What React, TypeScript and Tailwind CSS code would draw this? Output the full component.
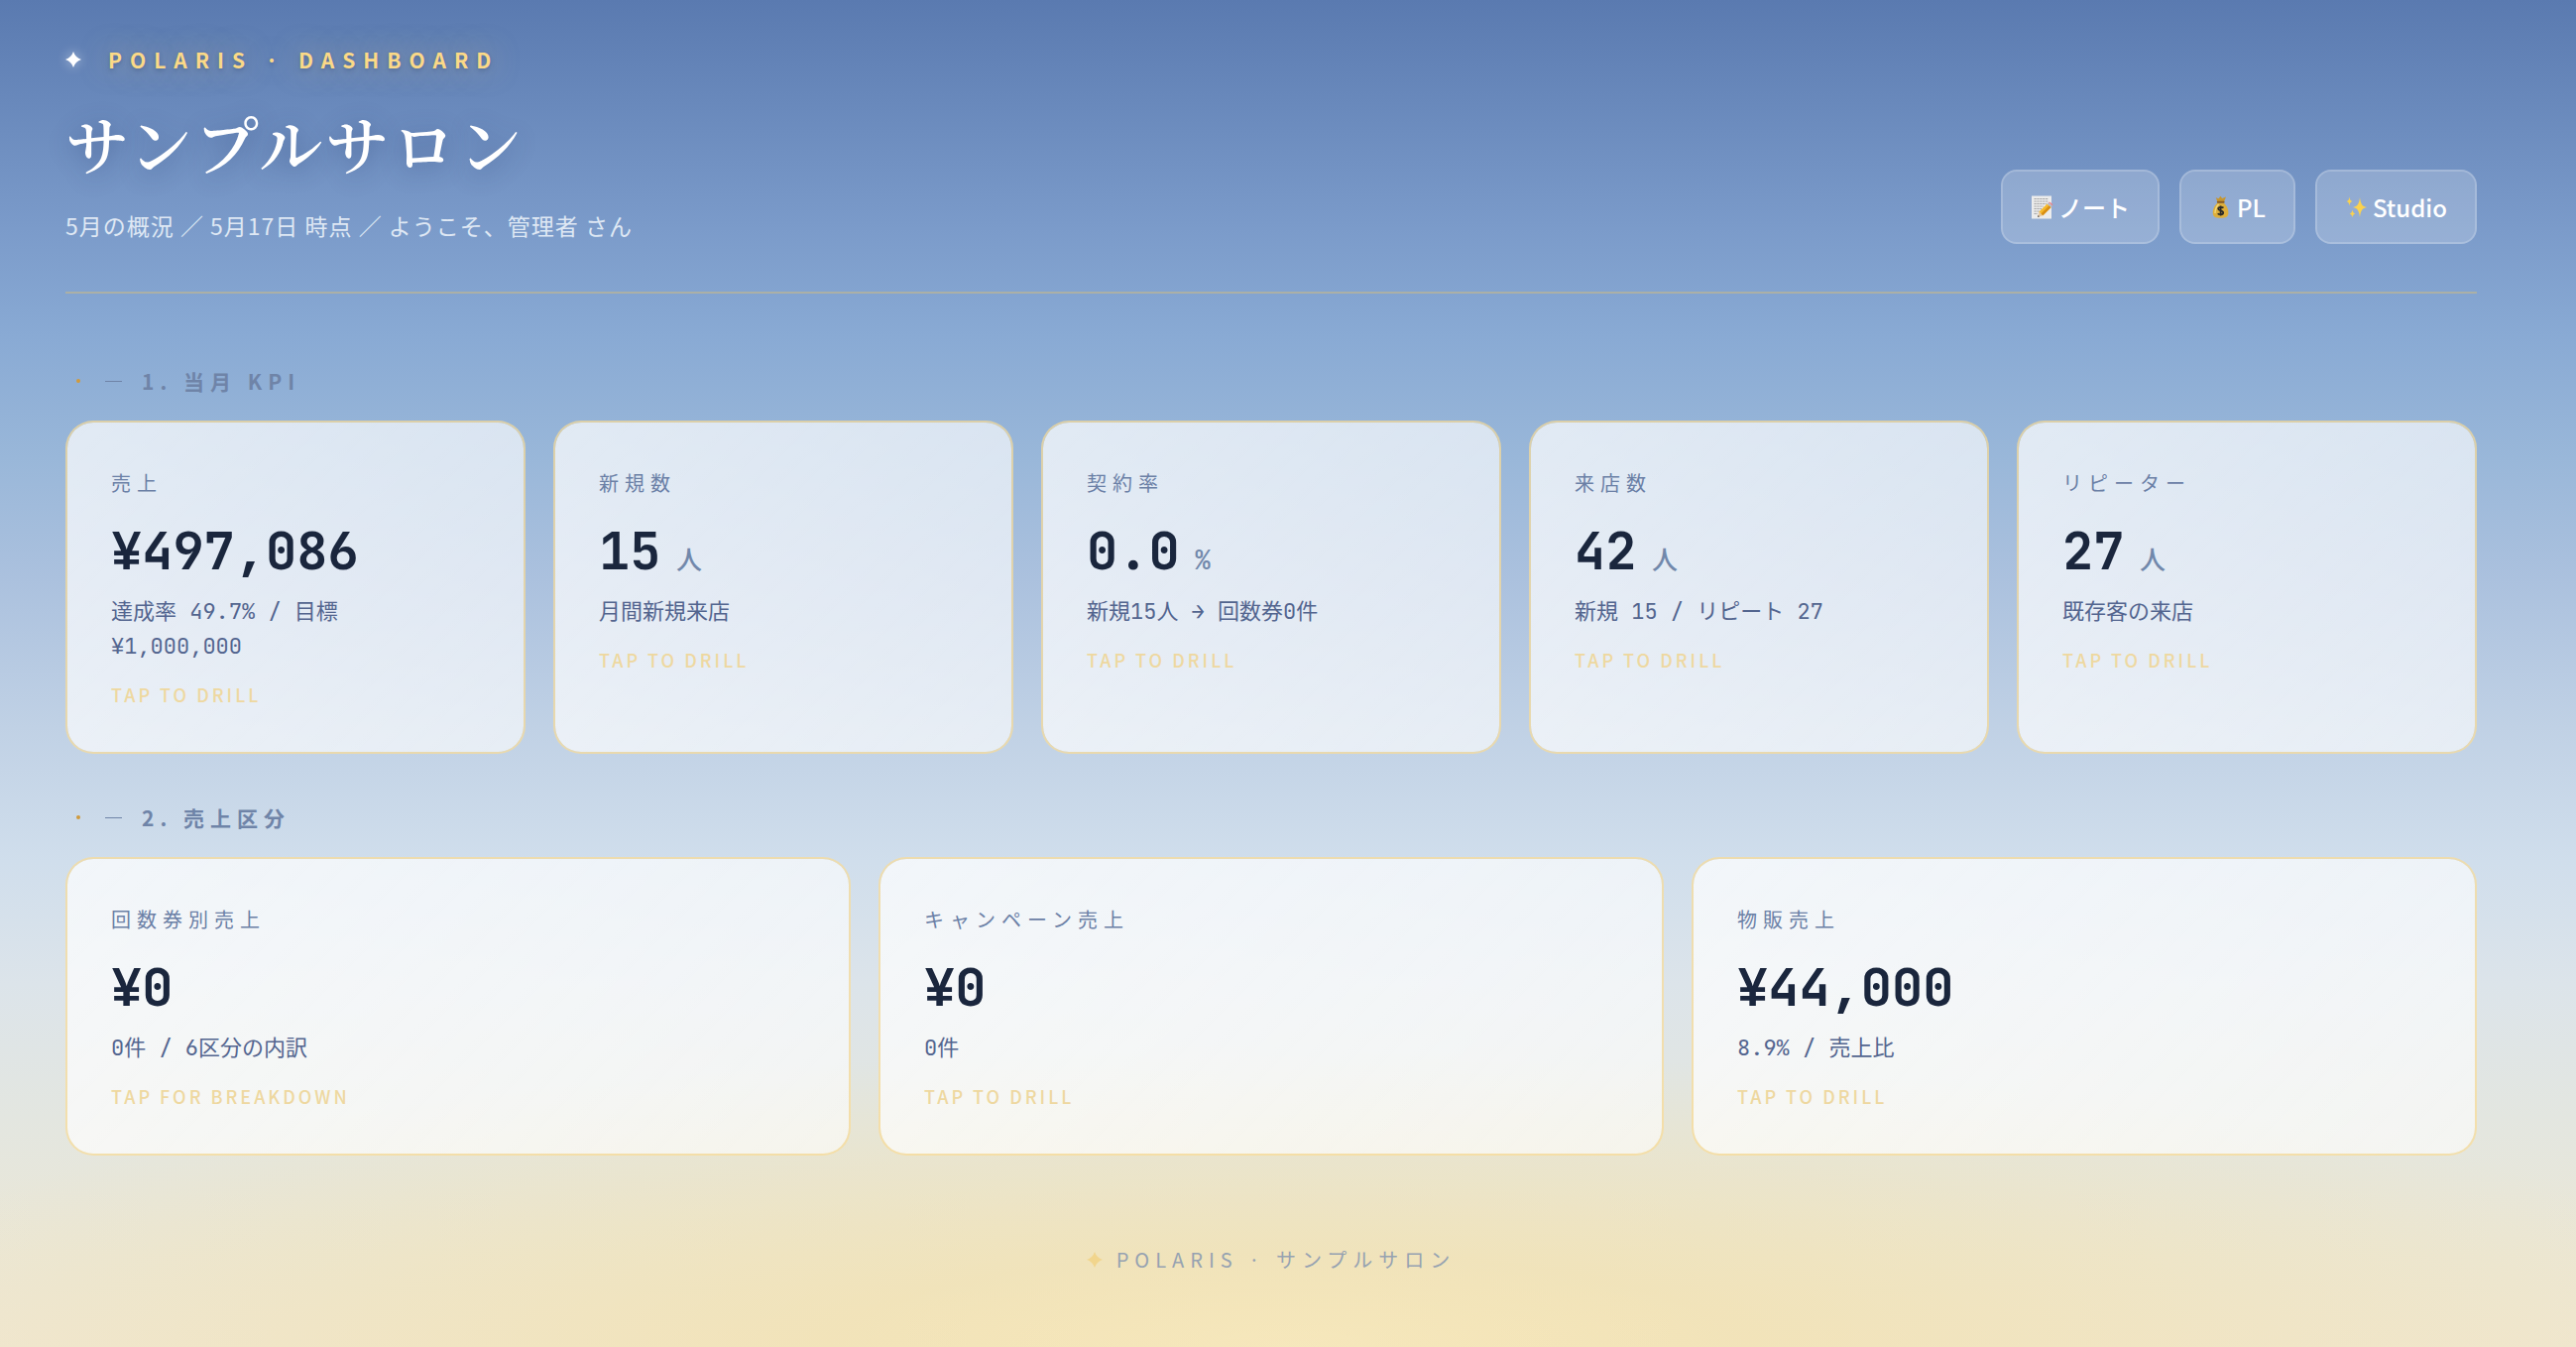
import React from 'react';

const SANS = "font-['Noto_Sans_CJK_JP',sans-serif]";
const SERIF = "font-['Noto_Serif_CJK_JP','Noto_Serif_JP','Noto_Sans_CJK_JP',serif]";
const MONO = "font-['JetBrains_Mono','DejaVu_Sans_Mono','Noto_Sans_CJK_JP',monospace]";

type Kpi = {
  label: string;
  value: string;
  unit?: string;
  sub: string;
  hint: string;
};

const MONTHLY: Kpi[] = [
  { label: '売上', value: '¥497,086', sub: '達成率 49.7% / 目標 ¥1,000,000', hint: 'TAP TO DRILL' },
  { label: '新規数', value: '15', unit: '人', sub: '月間新規来店', hint: 'TAP TO DRILL' },
  { label: '契約率', value: '0.0', unit: '%', sub: '新規15人 → 回数券0件', hint: 'TAP TO DRILL' },
  { label: '来店数', value: '42', unit: '人', sub: '新規 15 / リピート 27', hint: 'TAP TO DRILL' },
  { label: 'リピーター', value: '27', unit: '人', sub: '既存客の来店', hint: 'TAP TO DRILL' },
];

const BREAKDOWN: Kpi[] = [
  { label: '回数券別売上', value: '¥0', sub: '0件 / 6区分の内訳', hint: 'TAP FOR BREAKDOWN' },
  { label: 'キャンペーン売上', value: '¥0', sub: '0件', hint: 'TAP TO DRILL' },
  { label: '物販売上', value: '¥44,000', sub: '8.9% / 売上比', hint: 'TAP TO DRILL' },
];

function Sparkle({ className }: { className: string }) {
  return (
    <svg viewBox="0 0 16 16" fill="currentColor" className={className} aria-hidden="true">
      <path d="M8 0Q10 6 16 8Q10 10 8 16Q6 10 0 8Q6 6 8 0Z" />
    </svg>
  );
}

function NoteIcon() {
  return (
    <svg viewBox="0 0 24 24" className="w-6 h-6" aria-hidden="true">
      <rect x="1" y="0.5" width="20" height="23" fill="#ececec" />
      <g stroke="#9a9a9a" strokeWidth="0.9" strokeDasharray="2.2 0.7">
        <path d="M3.5 3.5H18M3.5 6H18M3.5 8.5H16M3.5 11H13M3.5 13.5H11M3.5 16H9M3.5 18.5H7" />
      </g>
      <path d="M7 22L8.4 16.6L12.4 20.2Z" fill="#e8c9a0" />
      <path d="M7 22L7.5 20L9 21.3Z" fill="#444" />
      <path d="M8.4 16.6L16.6 8.4L20.6 12L12.4 20.2Z" fill="#f6b92c" />
      <path d="M10.4 18.4L18.6 10.2L20.6 12L12.4 20.2Z" fill="#d98f14" />
      <path d="M16.6 8.4L18 7L22 10.6L20.6 12Z" fill="#b9bcc4" />
      <path d="M18 7C19.4 5.8 23.2 9.2 22 10.6Z" fill="#ee7f86" />
    </svg>
  );
}

function MoneyIcon() {
  return (
    <svg viewBox="0 0 24 24" className="w-6 h-6" aria-hidden="true">
      <path d="M8.4 6.6L6.8 2.2L9.6 3.2L11.4 0.8L13.2 3L17 1.6L15 6.6Z" fill="#c6962f" />
      <path d="M8.6 7.4C4.6 11 3.6 14.6 3.8 18C4 21.6 6 22.8 11.6 22.8C17.2 22.8 19.2 21.6 19.4 18C19.6 14.6 18.6 11 14.6 7.4Z" fill="#dcae3c" />
      <path d="M6 18C6 14 7.6 11 9.6 9" stroke="#f3d878" strokeWidth="1.4" fill="none" />
      <rect x="7.8" y="5.8" width="7.8" height="2" rx="1" fill="#8a5a1c" />
      <path d="M14.4 12.6C13.6 11.6 9.2 11.2 9.2 13.6C9.2 16 14.2 14.8 14.2 17.4C14.2 19.8 9.6 19.4 8.8 18.2M11.6 10.4V20.6" stroke="#2b2a26" strokeWidth="1.8" fill="none" />
    </svg>
  );
}

function StarsIcon() {
  return (
    <svg viewBox="0 0 24 24" fill="#fbd24e" className="w-6 h-6" aria-hidden="true">
      <path d="M15 2C15.8 8.6 17.4 11.2 22 12C17.4 12.8 15.8 15.4 15 22C14.2 15.4 12.6 12.8 8 12C12.6 11.2 14.2 8.6 15 2Z" />
      <path d="M4.5 1.5C4.9 4.4 5.6 5.6 7.6 6C5.6 6.4 4.9 7.6 4.5 10.5C4.1 7.6 3.4 6.4 1.4 6C3.4 5.6 4.1 4.4 4.5 1.5Z" />
      <path d="M7.5 14.5C7.9 17 8.6 18 10.4 18.4C8.6 18.8 7.9 19.8 7.5 22.3C7.1 19.8 6.4 18.8 4.6 18.4C6.4 18 7.1 17 7.5 14.5Z" />
    </svg>
  );
}

const LINKS = [
  { label: 'ノート', icon: NoteIcon },
  { label: 'PL', icon: MoneyIcon },
  { label: 'Studio', icon: StarsIcon },
];

function KpiCard({ item }: { item: Kpi }) {
  return (
    <button
      type="button"
      className="flex flex-col items-start text-left px-11 pt-11 pb-[42px] rounded-[28px] border-2 border-[#fadc96]/70 bg-linear-135 from-white/72 to-white/60 bg-clip-padding"
    >
      <span className="text-[20px] leading-[34px] tracking-[6px] text-[#6b80a6]">{item.label}</span>
      <span className={`${MONO} mt-[18px] text-[52px] leading-[68px] font-bold text-[#1a263d]`}>
        {item.value}
        {item.unit && <span className="text-[26px] leading-none font-medium text-[#7188ab]"> {item.unit}</span>}
      </span>
      <span className={`${MONO} mt-[9px] text-[22px] leading-[35px] text-[#53658f]`}>{item.sub}</span>
      <span className="mt-4 text-[18px] leading-[31px] tracking-[3px] font-medium text-[#eed8a0]">{item.hint}</span>
    </button>
  );
}

function SectionTitle({ children }: { children: React.ReactNode }) {
  return (
    <h2 className="flex items-center h-[34px] pl-[11px] text-[21px] leading-[34px] font-bold tracking-[6px] text-[#6f84a8]">
      <span className="w-1 h-1 rounded-full bg-[#d09a3c]" />
      <span className="w-[17px] h-px ml-[25px] mr-5 bg-[#6f84a8]" />
      {children}
    </h2>
  );
}

export default function App() {
  return (
    <div
      className={`${SANS} min-h-screen pl-[66px] pr-[100px] pt-[43px] bg-[radial-gradient(ellipse_18%_7%_at_50%_100%,rgba(250,240,208,0.4),rgba(250,240,208,0)),radial-gradient(ellipse_60%_22%_at_50%_100%,rgba(244,224,165,0.8),rgba(244,224,165,0)),linear-gradient(180deg,#5a7ab0_0%,#7b9bca_17%,#89aad4_25%,#99b7d9_34%,#abc1de_43%,#c0d1e5_54%,#d0deec_64%,#dce4ea_73%,#e3e6e0_83%,#ebe7d6_93%,#efe7d3_100%)]`}
    >
      <header className="flex items-end justify-between pb-12 border-b-2 border-[#abb0a6]">
        <div>
          <p className="flex items-center gap-[27px] text-[21px] leading-[34px] font-bold tracking-[8px] text-[#fbd987] [text-shadow:0_2px_4px_rgba(40,60,100,0.35),0_0_28px_rgba(251,217,135,0.5)]">
            <Sparkle className="w-4 h-4 text-white drop-shadow-[0_0_6px_rgba(255,255,255,0.6)]" />
            POLARIS · DASHBOARD
          </p>
          <h1 className={`${SERIF} mt-[18px] text-[64px] leading-[96px] font-semibold tracking-[3px] text-white [text-shadow:0_4px_24px_rgba(40,60,110,0.45)]`}>
            サンプルサロン
          </h1>
          <p className="mt-[17px] text-[23px] leading-[38px] tracking-[1px] text-[#dfe8f4]">
            5月の概況 ／ 5月17日 時点 ／ ようこそ、管理者 さん
          </p>
        </div>
        <nav className="flex gap-5">
          {LINKS.map(({ label, icon: Icon }) => (
            <a
              key={label}
              href="#"
              className="flex items-center gap-1 px-7 py-4 rounded-2xl border-2 border-white/35 bg-white/20 bg-clip-padding text-[24px] leading-[39px] font-medium text-white"
            >
              <Icon />
              {label}
            </a>
          ))}
        </nav>
      </header>

      <main>
        <section className="mt-[71px]">
          <SectionTitle>1. 当月 KPI</SectionTitle>
          <div className="grid grid-cols-5 gap-7 mt-[23px]">
            {MONTHLY.map((item) => (
              <KpiCard key={item.label} item={item} />
            ))}
          </div>
        </section>

        <section className="mt-[47px]">
          <SectionTitle>2. 売上区分</SectionTitle>
          <div className="grid grid-cols-3 gap-7 mt-[23px]">
            {BREAKDOWN.map((item) => (
              <KpiCard key={item.label} item={item} />
            ))}
          </div>
        </section>
      </main>

      <footer className="flex items-center justify-center gap-[14px] mt-[88px] text-[20px] leading-[34px] tracking-[6px] text-[#96a2b1]">
        <Sparkle className="w-4 h-4 text-[#f1d58d]" />
        POLARIS · サンプルサロン
      </footer>
    </div>
  );
}
